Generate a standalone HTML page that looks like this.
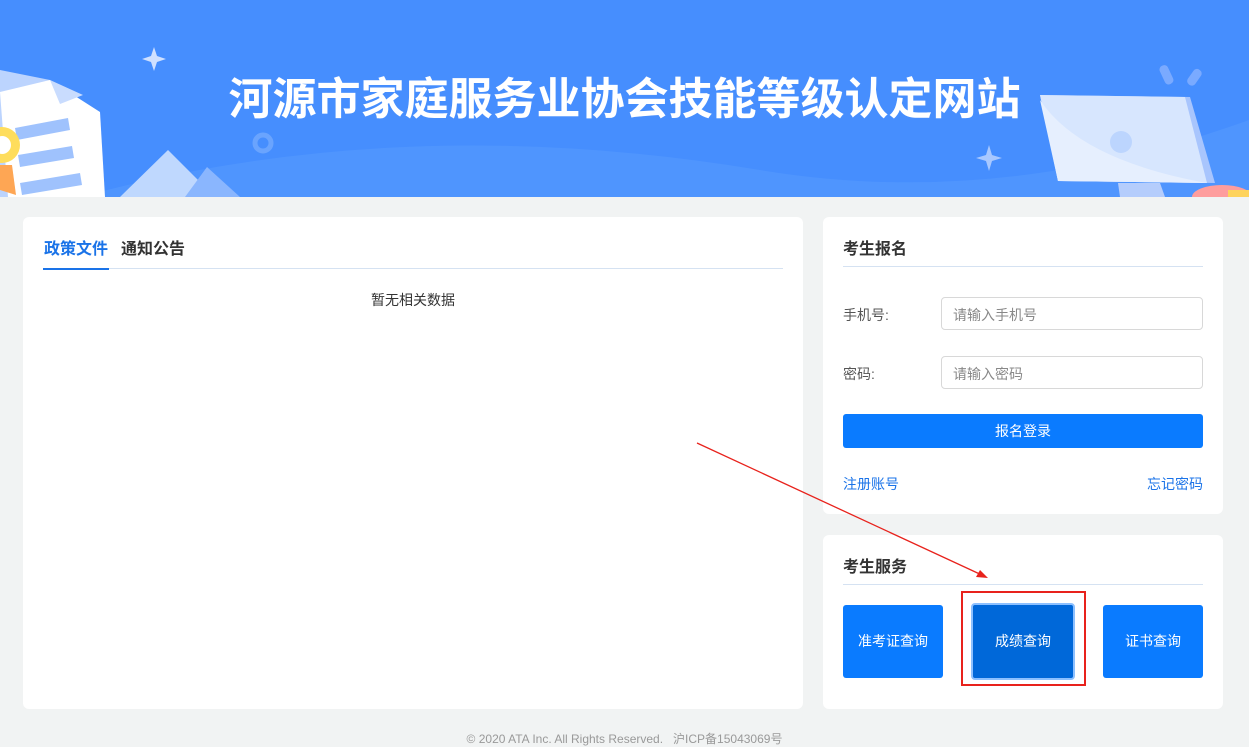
<!DOCTYPE html>
<html><head><meta charset="utf-8"><style>
*{margin:0;padding:0;box-sizing:border-box}
body{width:1249px;height:745px;background:#f1f3f3;font-family:"Liberation Sans","Noto Sans CJK SC",sans-serif;position:relative;overflow:hidden;color:#333}
.hdr{position:absolute;left:0;top:0;width:1249px;height:197px;background:#468efe;overflow:hidden}
.title{position:absolute;left:0;width:1249px;top:63px;text-align:center;color:#fff;font-size:44px;font-weight:bold;letter-spacing:0}
.card{position:absolute;background:#fff;border-radius:6px}
.tabs{position:absolute;left:20px;right:20px;top:18px;height:34px;border-bottom:1px solid #d5e2f2;font-size:16px;font-weight:bold}
.tab{position:absolute;top:0;height:34px}
.h{position:absolute;left:20px;right:20px;top:18px;height:32px;border-bottom:1px solid #d5e2f2;font-size:16px;font-weight:bold;color:#333}
.lbl{position:absolute;left:20px;font-size:14px;color:#555}
.inp{position:absolute;left:118px;width:262px;height:33px;border:1px solid #d8d8d8;border-radius:4px;font-size:14px;color:#888;padding:7px 11px}
.btn{position:absolute;left:20px;width:360px;height:34px;top:197px;background:#0a7bff;border-radius:3px;color:#fff;font-size:14px;text-align:center;line-height:34px}
.lk{position:absolute;top:257px;font-size:14px;color:#1a73e8}
.sb{position:absolute;top:70px;width:100px;height:73px;background:#0a7bff;border-radius:3px;color:#fff;font-size:14px;text-align:center;line-height:73px}
</style></head><body>
<div class="hdr">
<svg width="1249" height="197" style="position:absolute;left:0;top:0">
<path d="M80 197 Q400 110 760 170 Q1000 210 1249 120 L1249 197Z" fill="#4f95fe"/>
<polygon points="120,197 168,150 215,197" fill="#bfd8fe"/>
<polygon points="185,197 207,167 240,197" fill="#8ab6fe"/>
<path d="M154 47 l3 9 l9 3 l-9 3 l-3 9 l-3 -9 l-9 -3 l9 -3z" fill="#cfe0ff"/>
<path d="M989 145 l3 10 l10 3 l-10 3 l-3 10 l-3 -10 l-10 -3 l10 -3z" fill="#a8c8ff"/>
<circle cx="263" cy="143" r="8" fill="none" stroke="#6aa4fe" stroke-width="5"/>
<polygon points="0,70 50,80 60,197 0,197" fill="#bcd4fe"/>
<polygon points="0,92 50,80 100,112 105,197 8,197" fill="#fff"/>
<polygon points="50,80 83,95 60,104" fill="#c9dcfe"/>
<polygon points="15,128 68,118 70,130 17,140" fill="#9fc2fd"/>
<polygon points="18,155 72,146 74,158 20,167" fill="#9fc2fd"/>
<polygon points="20,183 80,173 82,185 22,195" fill="#9fc2fd"/>
<circle cx="2" cy="145" r="18" fill="#fedd5c"/><circle cx="2" cy="145" r="9" fill="#fff"/>
<polygon points="0,165 12,165 16,195 0,190" fill="#fea654"/>
<rect x="1162" y="65" width="9" height="20" rx="4" fill="#7aaaff" transform="rotate(-25 1166 75)"/>
<rect x="1190" y="68" width="9" height="18" rx="4" fill="#7aaaff" transform="rotate(35 1194 77)"/>
<polygon points="1118,183 1160,183 1165,197 1120,197" fill="#b5cdfc"/>
<polygon points="1040,95 1190,97 1215,183 1058,181" fill="#a8c5fd"/>
<polygon points="1040,95 1185,97 1207,183 1058,181" fill="#d7e6fe"/>
<path d="M1040 100 Q1080 160 1207 183 L1058 181Z" fill="#e6effe"/>
<circle cx="1121" cy="142" r="11" fill="#bcd5fe"/>
<ellipse cx="1222" cy="197" rx="30" ry="12" fill="#fe9d9d"/>
<rect x="1228" y="190" width="30" height="10" fill="#fed35c"/>
</svg>
<div class="title">河源市家庭服务业协会技能等级认定网站</div>
</div>

<div class="card" style="left:23px;top:217px;width:780px;height:492px">
<div class="tabs"><div class="tab" style="left:0;color:#1a73e8;border-bottom:2px solid #1a73e8;height:35px;padding:0 1px">政策文件</div><div class="tab" style="left:78px;color:#333">通知公告</div></div>
<div style="position:absolute;left:0;width:780px;top:73px;text-align:center;font-size:14px;color:#333">暂无相关数据</div>
</div>

<div class="card" style="left:823px;top:217px;width:400px;height:297px">
<div class="h">考生报名</div>
<div class="lbl" style="top:88px">手机号:</div><div class="inp" style="top:80px">请输入手机号</div>
<div class="lbl" style="top:147px">密码:</div><div class="inp" style="top:139px">请输入密码</div>
<div class="btn">报名登录</div>
<div class="lk" style="left:20px">注册账号</div><div class="lk" style="right:20px">忘记密码</div>
</div>

<div class="card" style="left:823px;top:535px;width:400px;height:174px">
<div class="h">考生服务</div>
<div class="sb" style="left:20px">准考证查询</div>
<div class="sb" style="left:148px;width:104px;height:77px;top:68px;line-height:73px;background:#0068d9;border:2px solid #8cc0ff;border-radius:4px">成绩查询</div>
<div class="sb" style="left:280px">证书查询</div>
</div>
<div style="position:absolute;left:961px;top:591px;width:125px;height:95px;border:2px solid #e8221c"></div>
<svg width="1249" height="745" style="position:absolute;left:0;top:0">
<line x1="697" y1="443" x2="984" y2="576" stroke="#e8221c" stroke-width="1.3"/>
<polygon points="988,578 976,577 980,570" fill="#e8221c"/>
</svg>
<div style="position:absolute;left:0;width:1249px;top:730px;text-align:center;font-size:12px;color:#999">© 2020 ATA Inc. All Rights Reserved. &nbsp;&nbsp;沪ICP备15043069号</div>
</body></html>
